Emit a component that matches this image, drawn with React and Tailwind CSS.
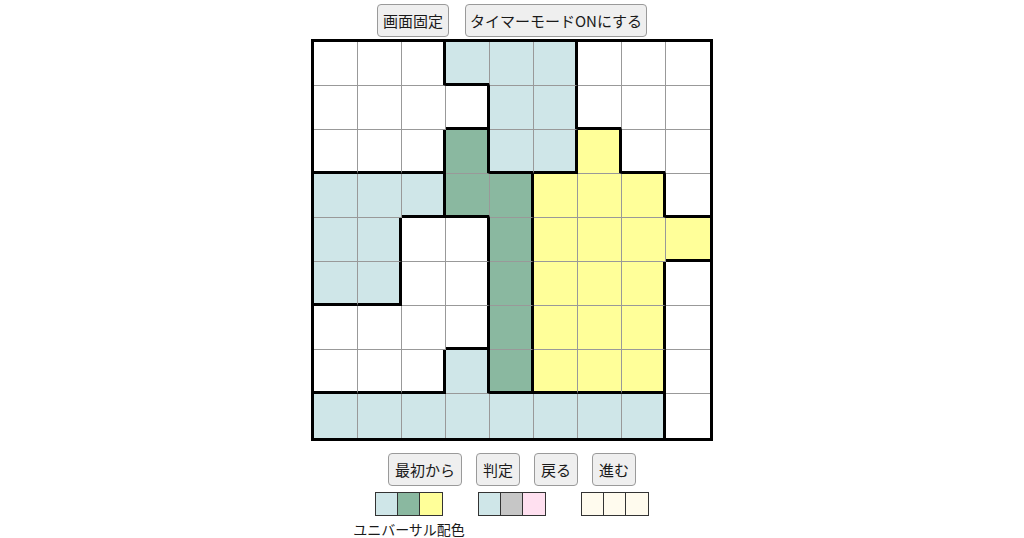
import React from "react";

const REGIONS = [
  "AAABBBCCC",
  "AAAABBCCC",
  "AAADBBECC",
  "FFFDDEEEC",
  "FFGGDEEEE",
  "FFGGDEEEI",
  "GGGGDEEEI",
  "GGGHDEEEI",
  "HHHHHHHHI",
];

const FILL = {
  A: "bg-white",
  B: "bg-[#cfe6e8]",
  C: "bg-white",
  D: "bg-[#8ab8a0]",
  E: "bg-[#ffff99]",
  F: "bg-[#cfe6e8]",
  G: "bg-white",
  H: "bg-[#cfe6e8]",
  I: "bg-white",
};

function Btn({ children, pad = "px-[6px]" }) {
  return (
    <button className={`h-[33px] ${pad} bg-[#efefef] border border-[#9a9a9a] rounded-[4px] text-[15px] text-[#1a1a1a] leading-none`}>
      {children}
    </button>
  );
}

function Cell({ r, c }) {
  const id = REGIONS[r][c];
  let right = "";
  if (c < 8) {
    right =
      REGIONS[r][c + 1] !== id
        ? "border-r-[3px] border-r-black"
        : "border-r border-r-[#999999]";
  }
  let bottom = "";
  if (r < 8) {
    bottom =
      REGIONS[r + 1][c] !== id
        ? "border-b-[3px] border-b-black"
        : "border-b border-b-[#999999]";
  }
  return <div className={`w-[44px] h-[44px] box-border ${FILL[id]} ${right} ${bottom}`} />;
}

function Palette({ colors }) {
  return (
    <div className="flex border border-[#333333]">
      {colors.map((c, i) => (
        <div
          key={i}
          className={`w-[22px] h-[22px] ${c} ${i < colors.length - 1 ? "border-r border-r-[#333333]" : ""}`}
        />
      ))}
    </div>
  );
}

export default function App() {
  const cells = [];
  for (let r = 0; r < 9; r++) {
    for (let c = 0; c < 9; c++) {
      cells.push(<Cell key={r + "-" + c} r={r} c={c} />);
    }
  }

  return (
    <div
      className="min-h-screen bg-white flex flex-col items-center pt-[4px]"
      style={{ fontFamily: '"Noto Sans CJK JP", "Noto Sans", sans-serif' }}
    >
      <div className="flex gap-[16px]">
        <Btn pad="px-[5px]">画面固定</Btn>
        <Btn pad="px-[4px]">タイマーモードONにする</Btn>
      </div>

      <div className="mt-[2px] border-[3px] border-black grid grid-cols-[repeat(9,44px)]">
        {cells}
      </div>

      <div className="mt-[12px] flex gap-[14px]">
        <Btn>最初から</Btn>
        <Btn>判定</Btn>
        <Btn>戻る</Btn>
        <Btn>進む</Btn>
      </div>

      <div className="mt-[6px] flex items-start gap-[35px]">
        <div className="flex flex-col items-center w-[68px]">
          <Palette colors={["bg-[#cfe6e8]", "bg-[#8ab8a0]", "bg-[#ffff99]"]} />
          <div className="mt-[6px] w-[68px] flex justify-center">
            <span className="text-[14px] text-[#1a1a1a] whitespace-nowrap leading-none">
              ユニバーサル配色
            </span>
          </div>
        </div>
        <Palette colors={["bg-[#cfe6e8]", "bg-[#c6c6c6]", "bg-[#ffe0f0]"]} />
        <Palette colors={["bg-[#fffbee]", "bg-[#fffbee]", "bg-[#fffbee]"]} />
      </div>
    </div>
  );
}
